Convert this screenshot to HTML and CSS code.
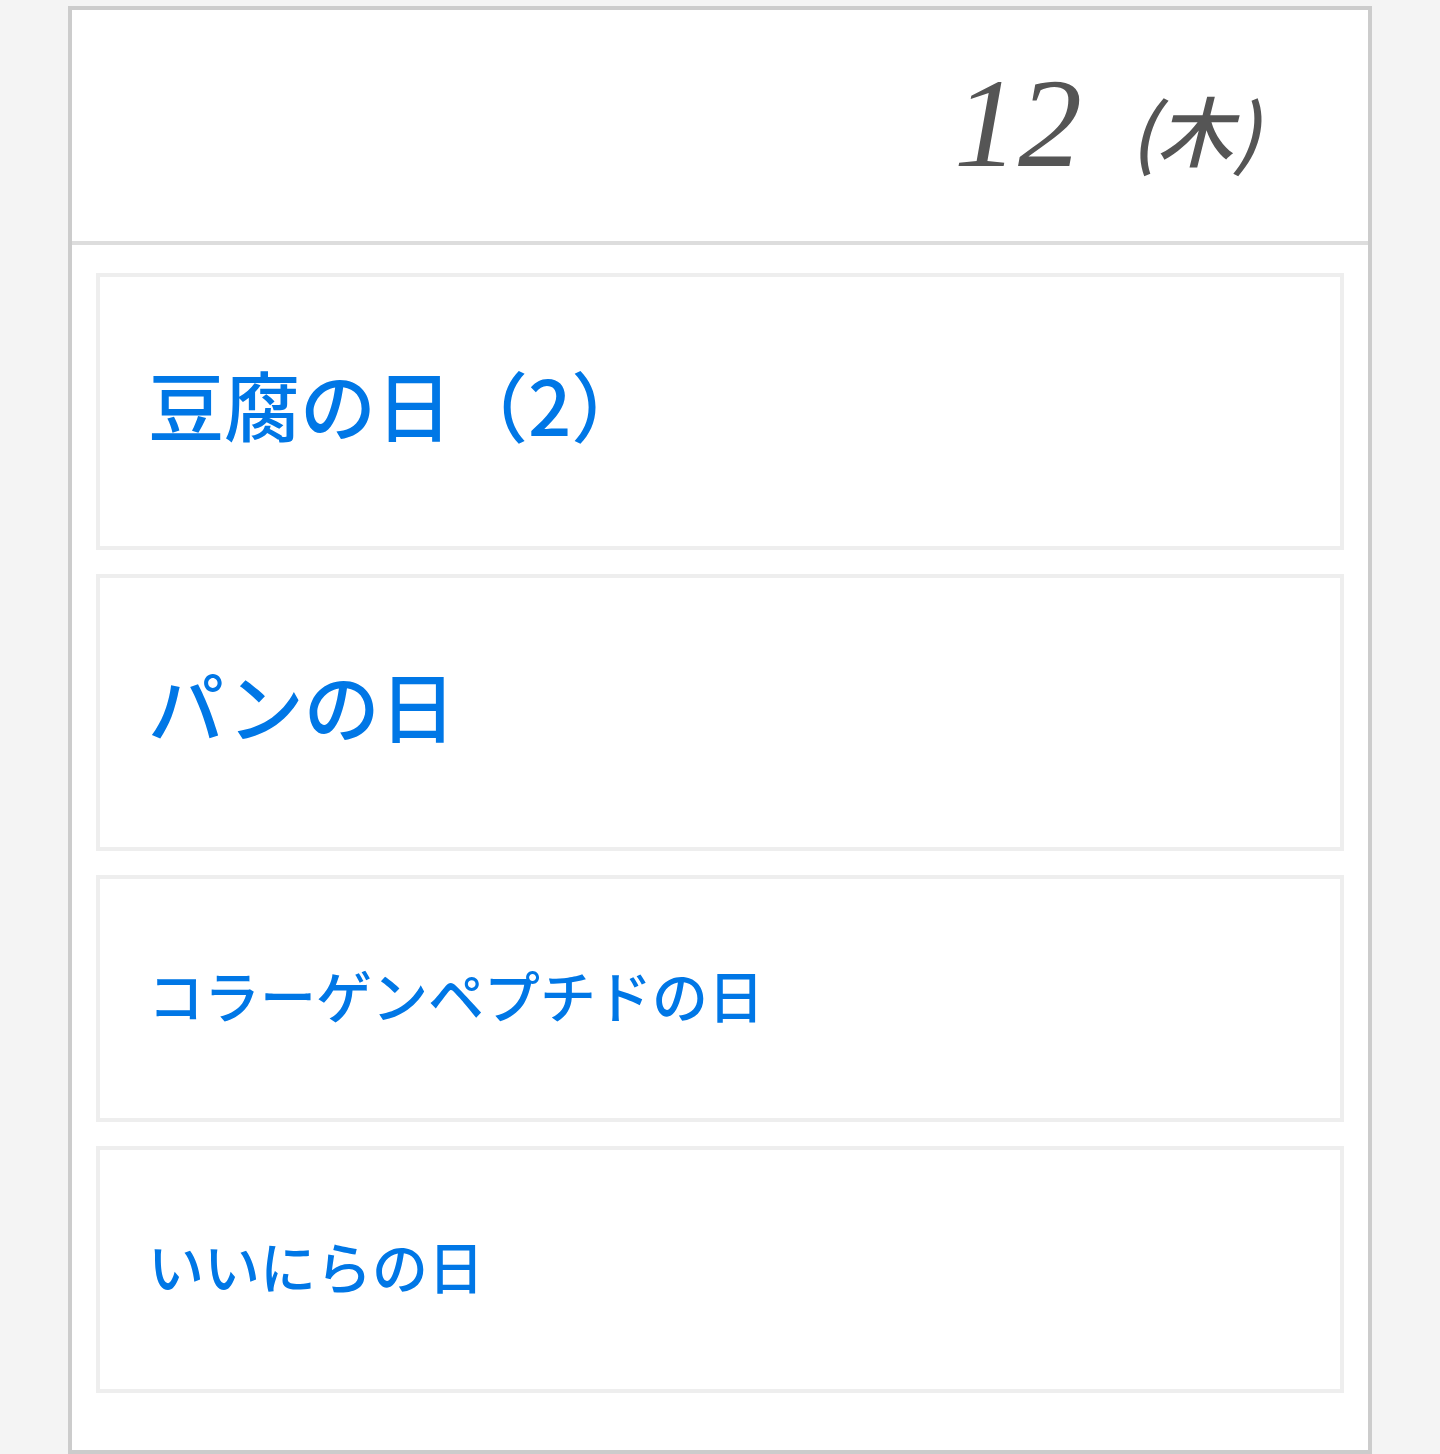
FILE: index.html
```html
<!DOCTYPE html>
<html lang="ja">
<head>
    <meta charset="UTF-8">
    <title>12日の記念日</title>
    <link rel="stylesheet" href="styles.css">
</head>
<body>
    <div class="day">
        <div class="day-head">
            <span class="day-num">12</span>
            <span class="day-week">(木)</span>
        </div>
        <ul class="events">
            <li class="event event-big"><a href="#">豆腐の日（2）</a></li>
            <li class="event event-big"><a href="#">パンの日</a></li>
            <li class="event"><a href="#">コラーゲンペプチドの日</a></li>
            <li class="event"><a href="#">いいにらの日</a></li>
        </ul>
    </div>
</body>
</html>
```

FILE: styles.css
```css
body {
    margin: 0;
    background-color: #f4f4f4;
    font-family: "Noto Sans CJK JP", "Noto Sans", sans-serif;
}

.day {
    width: 1304px;
    margin: 6px auto 0;
    box-sizing: border-box;
    background-color: #fff;
    border: 4px solid #ccc;
}

.day-head {
    display: flex;
    justify-content: flex-end;
    align-items: center;
    height: 235px;
    padding: 0 108px 6px 0;
    box-sizing: border-box;
    border-bottom: 4px solid #ddd;
    color: #555;
}

.day-num {
    font-family: "Liberation Serif", serif;
    font-style: italic;
    font-size: 128px;
    line-height: 1;
}

.day-week {
    margin-left: 48px;
    margin-top: 10px;
    font-style: italic;
    font-weight: 500;
    font-size: 76px;
    line-height: 1;
}

.events {
    display: flex;
    flex-direction: column;
    gap: 24px;
    list-style: none;
    margin: 0;
    padding: 28px 24px 57px;
}

.event {
    border: 4px solid #eee;
    padding: 70px 48px 79px;
    font-size: 56px;
    font-weight: 500;
    line-height: 90px;
}

.event-big {
    padding: 66px 48px 83px;
    font-size: 76px;
    line-height: 120px;
}

.event a {
    color: #0077e6;
    text-decoration: none;
}
```
